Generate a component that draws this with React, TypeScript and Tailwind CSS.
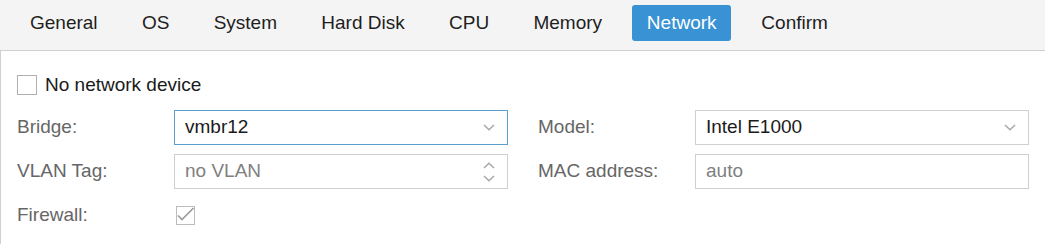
import React from 'react';

const TABS = ['General', 'OS', 'System', 'Hard Disk', 'CPU', 'Memory', 'Network', 'Confirm'];

const Chevron = ({ up = false }: { up?: boolean }) => (
  <svg viewBox="0 0 12 7" width="12" height="7" fill="none" stroke="#a8a8a8" strokeWidth={1.5}>
    <polyline points={up ? '1,6 6,1.2 11,6' : '1,1 6,5.8 11,1'} />
  </svg>
);

const Field = ({
  label,
  children,
}: {
  label: string;
  children: React.ReactNode;
}) => (
  <div className="flex items-center h-[35px]">
    <div className="w-[157px] shrink-0 text-[#666]">{label}</div>
    <div className="flex-1 min-w-0 h-full">{children}</div>
  </div>
);

const Combo = ({ value, focused = false }: { value: string; focused?: boolean }) => (
  <div
    className={
      'h-full flex items-center justify-between pl-[10px] pr-[12px] border bg-white ' +
      (focused ? 'border-[#5a9fcf]' : 'border-[#cfcfcf]')
    }
  >
    <span className="text-[#1a1a1a]">{value}</span>
    <Chevron />
  </div>
);

export default function App() {
  return (
    <div className="w-[1045px] h-[244px] bg-white font-['Liberation_Sans',Arial,sans-serif] text-[19px] overflow-hidden">
      <div className="h-[51px] bg-[#f4f4f4] border-b border-[#d0d0d0] flex items-start pt-[5px] pl-[16px] gap-[16.3px]">
        {TABS.map((t) =>
          t === 'Network' ? (
            <div
              key={t}
              className="h-[36px] px-[14.5px] flex items-center rounded-[3px] bg-[#3892d4] text-white"
            >
              {t}
            </div>
          ) : (
            <div key={t} className="h-[36px] px-[14px] flex items-center text-[#1e1e1e]">
              {t}
            </div>
          ),
        )}
      </div>

      <div className="h-[193px] border-l border-[#d0d0d0] pl-[16px] pr-[16px] pt-[24px]">
        <div className="flex items-center gap-[8px] h-[20px] text-[#1a1a1a]">
          <span className="w-[20px] h-[20px] border border-[#b0b0b0] bg-white shrink-0" />
          No network device
        </div>

        <div className="grid grid-cols-2 gap-x-[30px] gap-y-[9px] mt-[15px]">
          <Field label="Bridge:">
            <Combo value="vmbr12" focused />
          </Field>
          <Field label="Model:">
            <Combo value="Intel E1000" />
          </Field>
          <Field label="VLAN Tag:">
            <div className="h-full flex items-center justify-between pl-[10px] pr-[12px] border border-[#cfcfcf] bg-white">
              <span className="text-[#808080]">no VLAN</span>
              <div className="flex flex-col gap-[6px]">
                <Chevron up />
                <Chevron />
              </div>
            </div>
          </Field>
          <Field label="MAC address:">
            <div className="h-full flex items-center pl-[10px] border border-[#cfcfcf] bg-white">
              <span className="text-[#808080]">auto</span>
            </div>
          </Field>
          <Field label="Firewall:">
            <span className="mt-[8px] ml-[2px] w-[19px] h-[19px] border border-[#bcbcbc] bg-white flex items-center justify-center overflow-visible">
              <svg viewBox="0 0 19 19" width="19" height="19" fill="none" stroke="#9c9c9c" strokeWidth={1.7} className="shrink-0">
                <polyline points="2,9.5 6,13.5 17.5,2" />
              </svg>
            </span>
          </Field>
        </div>
      </div>
    </div>
  );
}
